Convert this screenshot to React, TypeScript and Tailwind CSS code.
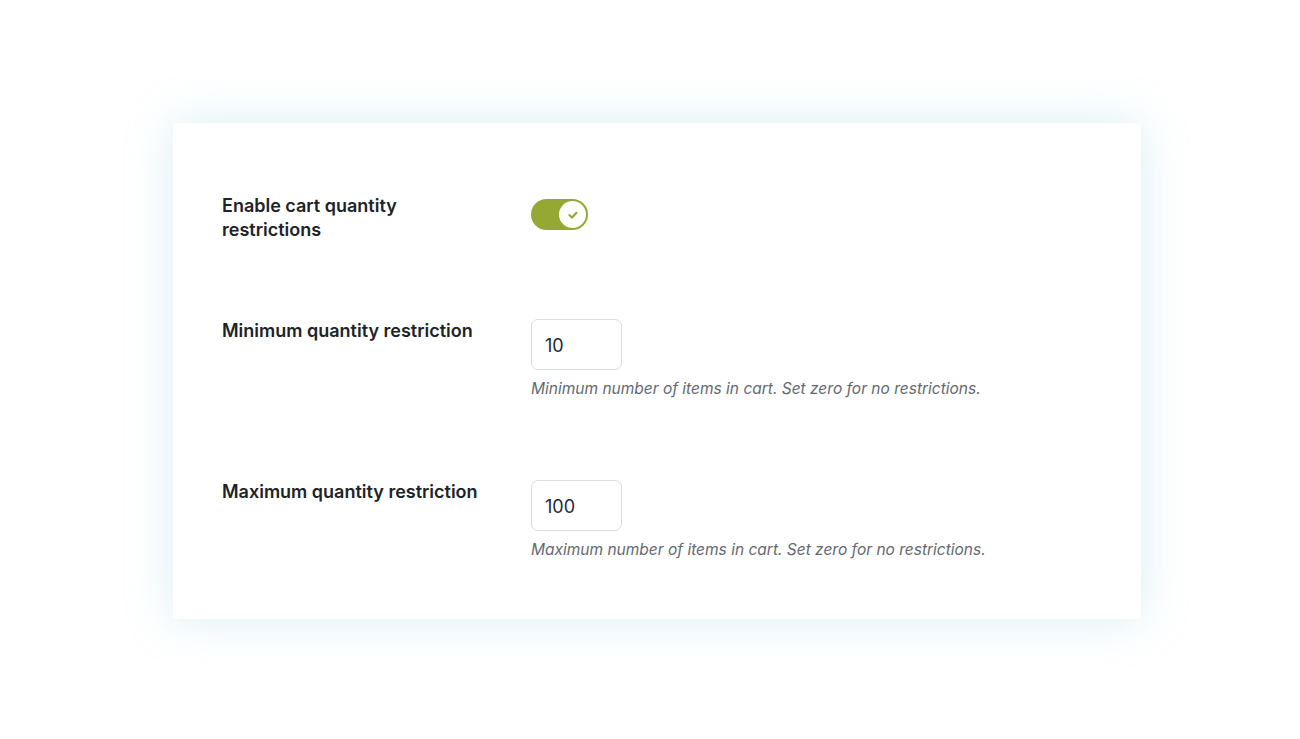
import React from "react";

function Toggle() {
  return (
    <div className="flex h-[31px] w-[57px] items-center justify-end rounded-full bg-[#94a833] pr-[2px]">
      <div className="flex h-[27px] w-[27px] items-center justify-center rounded-full bg-white">
        <svg width="12" height="12" viewBox="0 0 12 12" fill="none">
          <path d="M2.5 6.2 L5 8.5 L9.5 3.8" stroke="#94a833" strokeWidth="2.2" strokeLinecap="round" strokeLinejoin="round" />
        </svg>
      </div>
    </div>
  );
}

function NumberField({ value, help }: { value: string; help: string }) {
  return (
    <div className="flex flex-col items-start">
      <div className="flex h-[51px] w-[91px] items-center rounded-[7px] border border-[#d9dee3] bg-white px-[13px] pt-[2px] text-[18px] text-[#1e2a36]">
        {value}
      </div>
      <p className="mt-[9px] text-[15.5px] italic leading-[20px] text-[#646970]">{help}</p>
    </div>
  );
}

export default function App() {
  return (
    <div className="flex min-h-[739px] w-full bg-white pl-[173px] pt-[123px] font-['Inter',sans-serif]">
      <div className="h-[496px] w-[968px] rounded-[3px] bg-white pl-[49px] pt-[71px] shadow-[0_0_45px_rgba(150,205,225,0.35)]">
        <div className="flex">
          <div className="w-[309px] pr-6 text-[18px] font-semibold leading-[24px] text-[#1d2327]">
            Enable cart quantity
            <br />
            restrictions
          </div>
          <div className="pt-[5px]">
            <Toggle />
          </div>
        </div>
        <div className="mt-[77px] flex">
          <div className="w-[309px] text-[18px] font-semibold leading-[24px] text-[#1d2327]">
            Minimum quantity restriction
          </div>
          <NumberField value="10" help="Minimum number of items in cart. Set zero for no restrictions." />
        </div>
        <div className="mt-[81px] flex">
          <div className="w-[309px] text-[18px] font-semibold leading-[24px] text-[#1d2327]">
            Maximum quantity restriction
          </div>
          <NumberField value="100" help="Maximum number of items in cart. Set zero for no restrictions." />
        </div>
      </div>
    </div>
  );
}
